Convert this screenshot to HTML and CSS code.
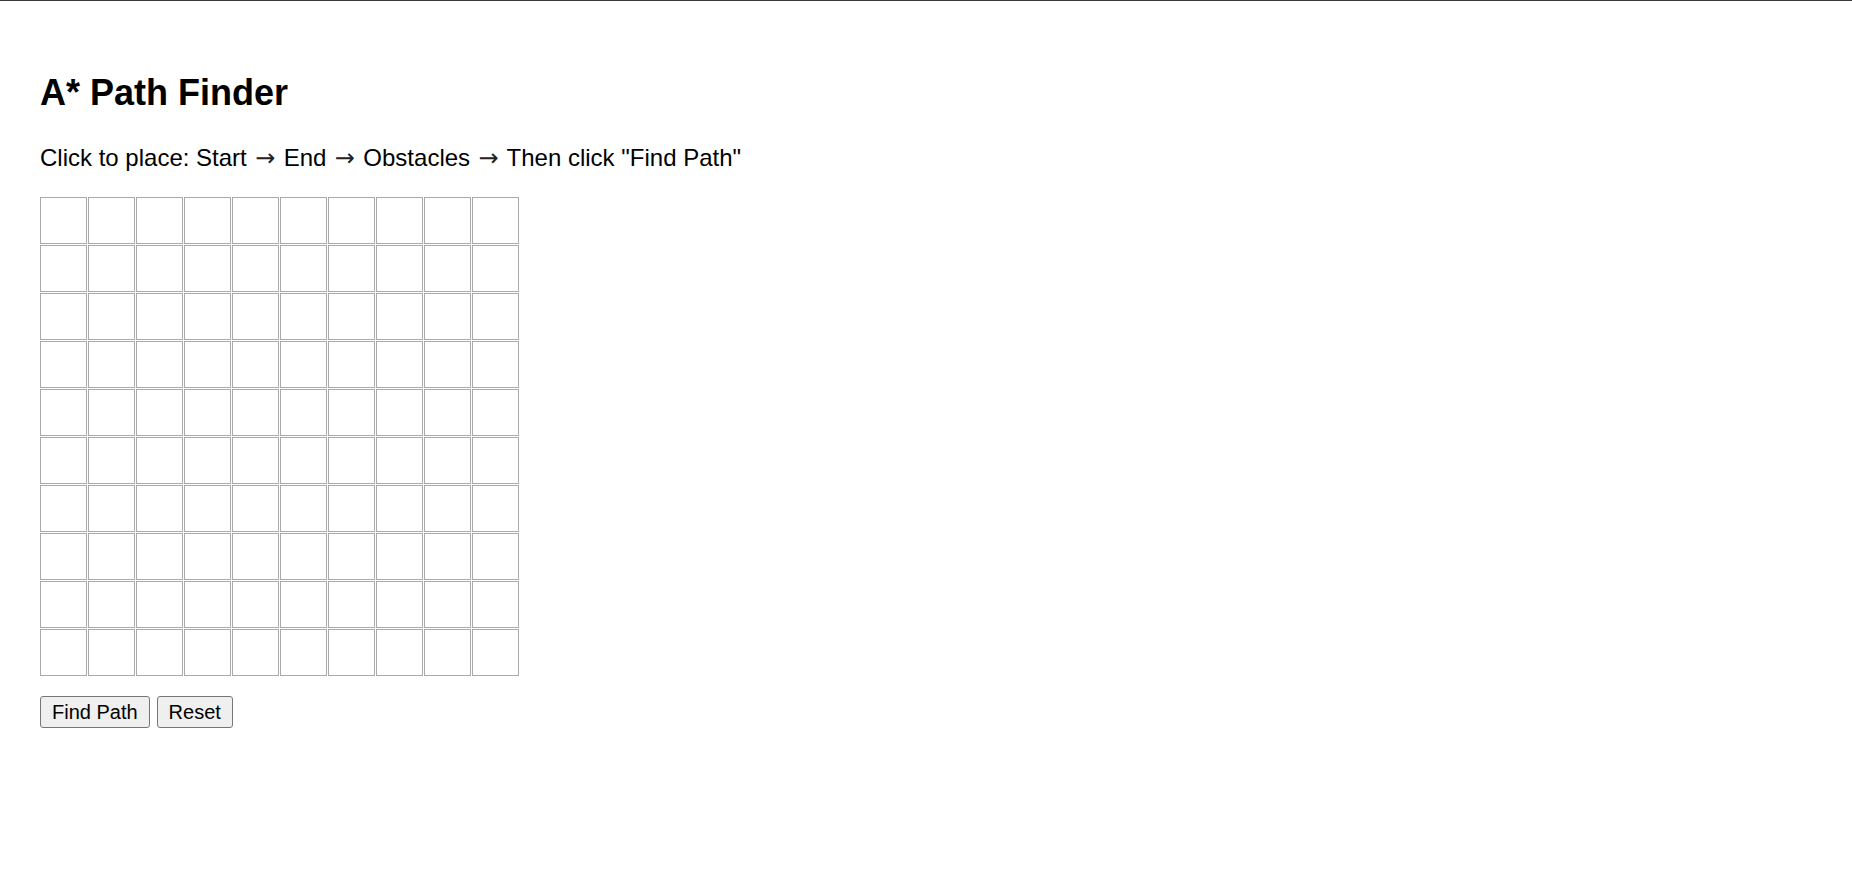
FILE: index.html
```html
<!DOCTYPE html>
<html lang="en">
<head>
<meta charset="utf-8">
<title>A* Path Finder</title>
<link rel="stylesheet" href="styles.css">
</head>
<body>
<main class="page">
  <h1 class="title">A* Path Finder</h1>
  <p class="hint">Click to place: Start <span class="arrow">→</span> End <span class="arrow">→</span> Obstacles <span class="arrow">→</span> Then click "Find Path"</p>
  <div class="grid">
    <div class="cell"></div><div class="cell"></div><div class="cell"></div><div class="cell"></div><div class="cell"></div><div class="cell"></div><div class="cell"></div><div class="cell"></div><div class="cell"></div><div class="cell"></div>
    <div class="cell"></div><div class="cell"></div><div class="cell"></div><div class="cell"></div><div class="cell"></div><div class="cell"></div><div class="cell"></div><div class="cell"></div><div class="cell"></div><div class="cell"></div>
    <div class="cell"></div><div class="cell"></div><div class="cell"></div><div class="cell"></div><div class="cell"></div><div class="cell"></div><div class="cell"></div><div class="cell"></div><div class="cell"></div><div class="cell"></div>
    <div class="cell"></div><div class="cell"></div><div class="cell"></div><div class="cell"></div><div class="cell"></div><div class="cell"></div><div class="cell"></div><div class="cell"></div><div class="cell"></div><div class="cell"></div>
    <div class="cell"></div><div class="cell"></div><div class="cell"></div><div class="cell"></div><div class="cell"></div><div class="cell"></div><div class="cell"></div><div class="cell"></div><div class="cell"></div><div class="cell"></div>
    <div class="cell"></div><div class="cell"></div><div class="cell"></div><div class="cell"></div><div class="cell"></div><div class="cell"></div><div class="cell"></div><div class="cell"></div><div class="cell"></div><div class="cell"></div>
    <div class="cell"></div><div class="cell"></div><div class="cell"></div><div class="cell"></div><div class="cell"></div><div class="cell"></div><div class="cell"></div><div class="cell"></div><div class="cell"></div><div class="cell"></div>
    <div class="cell"></div><div class="cell"></div><div class="cell"></div><div class="cell"></div><div class="cell"></div><div class="cell"></div><div class="cell"></div><div class="cell"></div><div class="cell"></div><div class="cell"></div>
    <div class="cell"></div><div class="cell"></div><div class="cell"></div><div class="cell"></div><div class="cell"></div><div class="cell"></div><div class="cell"></div><div class="cell"></div><div class="cell"></div><div class="cell"></div>
    <div class="cell"></div><div class="cell"></div><div class="cell"></div><div class="cell"></div><div class="cell"></div><div class="cell"></div><div class="cell"></div><div class="cell"></div><div class="cell"></div><div class="cell"></div>
  </div>
  <div class="actions">
    <button class="btn" type="button">Find Path</button>
    <button class="btn" type="button">Reset</button>
  </div>
</main>
</body>
</html>
```
FILE: styles.css
```css
html {
  border-top: 1px solid #3a3a3a;
  background: #fff;
}
body {
  margin: 0;
  font-family: "Liberation Sans", Arial, sans-serif;
  color: #000;
}
.page {
  padding: 71px 40px 0;
}
.title {
  margin: 0;
  font-size: 36px;
  font-weight: bold;
  line-height: 42px;
}
.hint {
  margin: 30px 0 0;
  font-size: 24px;
  line-height: 28px;
}
.arrow {
  font-family: "Noto Sans", "DejaVu Sans", sans-serif;
  line-height: 0;
  padding: 0 1.75px;
  color: #222;
}
.grid {
  margin-top: 25px;
  display: grid;
  grid-template-columns: repeat(10, 47px);
  grid-auto-rows: 47px;
  gap: 1px;
}
.cell {
  box-sizing: border-box;
  border: 1px solid #aaaaaa;
  background: #fff;
}
.actions {
  margin-top: 20px;
  display: flex;
  gap: 7px;
}
.btn {
  box-sizing: border-box;
  height: 32px;
  padding: 0 11px;
  font-family: "Liberation Sans", Arial, sans-serif;
  font-size: 20px;
  color: #000;
  background: #efefef;
  border: 1px solid #767676;
  border-radius: 3px;
}
```
